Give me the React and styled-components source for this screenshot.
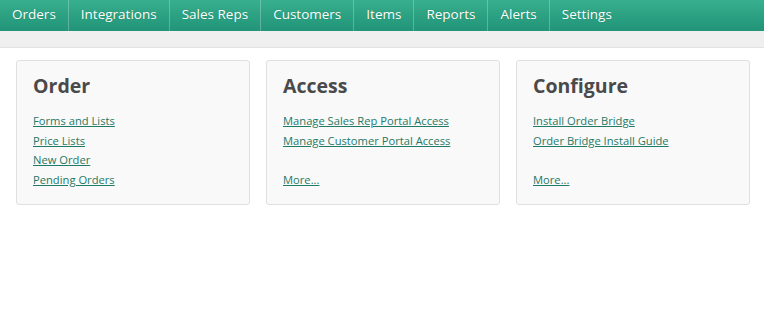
import React from "react";
import styled, { createGlobalStyle } from "styled-components";

const Global = createGlobalStyle`
  html, body { margin: 0; padding: 0; background: #fff; }
  body { font-family: "Open Sans", "Liberation Sans", sans-serif; }
`;

const NavBar = styled.nav`
  display: flex;
  height: 31px;
  background: linear-gradient(to bottom, #37af8d 0%, #229478 100%);
`;

const NavItem = styled.a`
  display: flex;
  align-items: center;
  box-sizing: border-box;
  padding: 0 12px 3px;
  color: #fff;
  font-size: 13.5px;
  text-decoration: none;
  text-shadow: 0 0 1px rgba(0, 60, 40, 0.35);
  border-right: ${(p) => (p.$last ? "none" : "1px solid rgba(255,255,255,0.25)")};
`;

const SubBar = styled.div`
  height: 16px;
  background: #efefef;
  border-bottom: 1px solid #e2e2e2;
`;

const Content = styled.main`
  display: grid;
  grid-template-columns: repeat(3, 234px);
  gap: 16px;
  padding: 12px 14px 0 16px;
`;

const Card = styled.section`
  box-sizing: border-box;
  height: 145px;
  background: #f9f9f9;
  border: 1px solid #e0e0e0;
  border-radius: 3px;
  padding: 11px 16px;
`;

const Title = styled.h2`
  margin: 0 0 11px;
  font-size: 19.5px;
  line-height: 28px;
  font-weight: 700;
  color: #4a4a4a;
`;

const LinkList = styled.div`
  display: flex;
  flex-direction: column;
  align-items: flex-start;
`;

const Link = styled.a`
  font-size: 11.2px;
  line-height: 19.5px;
  color: #1f7a67;
  text-decoration: underline;
  text-underline-offset: 1px;
`;

const Spacer = styled.div`
  height: 19.5px;
`;

const cards = [
  { title: "Order", links: ["Forms and Lists", "Price Lists", "New Order", "Pending Orders"] },
  { title: "Access", links: ["Manage Sales Rep Portal Access", "Manage Customer Portal Access", null, "More..."] },
  { title: "Configure", links: ["Install Order Bridge", "Order Bridge Install Guide", null, "More..."] },
];

const nav = ["Orders", "Integrations", "Sales Reps", "Customers", "Items", "Reports", "Alerts", "Settings"];

export default function App() {
  return (
    <>
      <Global />
      <NavBar>
        {nav.map((n, i) => (
          <NavItem key={n} href="#" $last={i === nav.length - 1}>
            {n}
          </NavItem>
        ))}
      </NavBar>
      <SubBar />
      <Content>
        {cards.map((c) => (
          <Card key={c.title}>
            <Title>{c.title}</Title>
            <LinkList>
              {c.links.map((l, i) =>
                l ? (
                  <Link key={i} href="#">
                    {l}
                  </Link>
                ) : (
                  <Spacer key={i} />
                )
              )}
            </LinkList>
          </Card>
        ))}
      </Content>
    </>
  );
}
